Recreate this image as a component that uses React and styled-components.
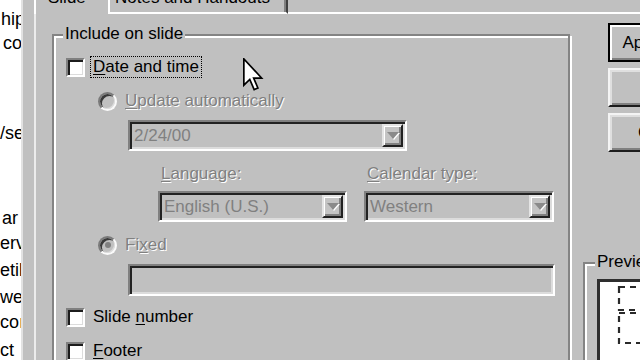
import React from 'react'
import styled, { createGlobalStyle } from 'styled-components'

const GlobalStyle = createGlobalStyle`
  html, body { margin: 0; padding: 0; }
  body {
    width: 640px;
    height: 360px;
    overflow: hidden;
    background: #c0c0c0;
    font-family: "Liberation Sans", Arial, sans-serif;
  }
`

const Screen = styled.div`
  position: relative;
  display: flex;
  width: 640px;
  height: 360px;
  overflow: hidden;
  font-size: 17px;
  color: #000;
  background: #c0c0c0;
`

const DocStrip = styled.div`
  flex: none;
  width: 21px;
  background: #fff;
  overflow: hidden;
  display: flex;
  flex-direction: column;
`

const DocLine = styled.div`
  height: 20px;
  line-height: 20px;
  margin-top: ${(p) => p.$gap}px;
  padding-left: ${(p) => p.$indent || 0}px;
  white-space: nowrap;
  font-size: 18px;
`

const Frame = styled.div`
  flex: none;
  width: 11px;
  border-left: 2px solid #e2e2e2;
`

const Main = styled.div`
  flex: 1;
  display: flex;
  flex-direction: column;
  min-width: 0;
`

const TabRow = styled.div`
  flex: none;
  height: 14px;
  display: flex;
  align-items: flex-end;
`

const Tab = styled.div`
  flex: none;
  box-sizing: border-box;
  width: ${(p) => p.$width}px;
  height: 14px;
  display: flex;
  align-items: flex-end;
  overflow: hidden;
  white-space: nowrap;
  line-height: 20px;
  border-left: 2px solid #fff;
  padding-left: ${(p) => p.$pad}px;
  padding-bottom: ${(p) => (p.$active ? 6 : 4)}px;
  border-right: ${(p) => (p.$active ? 'none' : '2px solid #404040')};
  border-bottom: ${(p) => (p.$active ? 'none' : '2px solid #fff')};
  box-shadow: ${(p) => (p.$active ? 'none' : 'inset -2px 0 0 #808080')};
`

const TabFiller = styled.div`
  flex: 1;
  height: 12px;
  border-bottom: 2px solid #fff;
`

const Panel = styled.div`
  flex: 1;
  display: flex;
  border-left: 2px solid #ececec;
  padding-left: 16px;
`

const Group = styled.div`
  position: relative;
  flex: none;
  box-sizing: border-box;
  width: ${(p) => p.$width}px;
  height: ${(p) => p.$height}px;
  margin-top: ${(p) => p.$top}px;
  margin-left: ${(p) => p.$left || 0}px;
  padding-left: ${(p) => p.$padLeft}px;
  border: 2px solid #848484;
  box-shadow: inset 2px 2px 0 #fff, 2px 2px 0 #fff;
  display: flex;
  flex-direction: column;
`

const GroupLabel = styled.span`
  position: absolute;
  top: -12px;
  left: ${(p) => p.$left}px;
  padding: 0 2px;
  line-height: 20px;
  background: #c0c0c0;
  white-space: nowrap;
`

const Row = styled.div`
  display: flex;
  align-items: center;
  height: 20px;
  margin-top: ${(p) => p.$top}px;
  margin-left: ${(p) => p.$left || 0}px;
  white-space: nowrap;
`

const Check = styled.span`
  flex: none;
  box-sizing: border-box;
  width: 19px;
  height: 19px;
  background: #fff;
  border: 2px solid;
  border-color: #808080 #fff #fff #808080;
  box-shadow: inset 2px 2px 0 #1c1c1c, inset -1px -1px 0 #dcdcdc;
`

const Radio = styled.span`
  position: relative;
  flex: none;
  box-sizing: border-box;
  width: 19px;
  height: 19px;
  border-radius: 50%;
  border: 2px solid;
  border-color: #7a7a7a #fafafa #fafafa #7a7a7a;
  box-shadow: inset 2px 2px 0 #3a3a3a, inset -1px -1px 0 #dcdcdc;
  background: #c0c0c0;

  &::after {
    content: '';
    display: ${(p) => (p.$checked ? 'block' : 'none')};
    position: absolute;
    left: 4.5px;
    top: 4.5px;
    width: 6px;
    height: 6px;
    border-radius: 50%;
    background: #808080;
  }
`

const Label = styled.span`
  margin-left: ${(p) => p.$gap}px;
  padding: 0 2px;
  line-height: 20px;
  border: 1px dotted ${(p) => (p.$focus ? '#000' : 'transparent')};
  color: ${(p) => (p.$disabled ? '#808080' : '#000')};
  text-shadow: ${(p) => (p.$disabled ? '1px 1px 0 #fff' : 'none')};
`

const Key = styled.span`
  text-decoration: underline;
  text-underline-offset: 2px;
`

const Field = styled.div`
  flex: none;
  box-sizing: border-box;
  display: flex;
  align-items: center;
  width: ${(p) => p.$width}px;
  height: ${(p) => p.$height || 31}px;
  margin-top: ${(p) => p.$top || 0}px;
  margin-left: ${(p) => p.$left || 0}px;
  padding: 2px 2px 2px 4px;
  border: 2px solid;
  border-color: #808080 #fff #fff #808080;
  box-shadow: inset 2px 2px 0 #222, inset -2px -2px 0 #dcdcdc;
  background: #c0c0c0;
  color: #808080;
  white-space: nowrap;
`

const DropButton = styled.span`
  flex: none;
  box-sizing: border-box;
  width: 21px;
  height: 23px;
  margin-left: auto;
  display: flex;
  align-items: center;
  justify-content: center;
  border: 2px solid;
  border-color: #e4e4e4 #202020 #202020 #e4e4e4;
  box-shadow: inset 1px 1px 0 #fff, inset -2px -2px 0 #808080;
  background: #c4c4c4;

  &::before {
    content: '';
    width: 0;
    height: 0;
    border-left: 6px solid transparent;
    border-right: 6px solid transparent;
    border-top: 7px solid #8a8a8a;
    filter: drop-shadow(1px 1px 0 #fff);
  }
`

const PairRow = styled.div`
  display: flex;
  gap: 17px;
  margin-top: 12px;
  margin-left: 92px;
`

const Column = styled.div`
  display: flex;
  flex-direction: column;
  gap: 6px;
`

const SideColumn = styled.div`
  flex: 1;
  display: flex;
  flex-direction: column;
  min-width: 0;
`

const Button = styled.div`
  flex: none;
  box-sizing: border-box;
  width: 113px;
  height: 39px;
  margin-top: ${(p) => p.$top}px;
  margin-left: 38px;
  display: flex;
  align-items: center;
  justify-content: center;
  white-space: nowrap;
  border: 2px solid;
  border-color: ${(p) => (p.$default ? '#000' : '#f4f4f4 #1c1c1c #1c1c1c #f4f4f4')};
  box-shadow: ${(p) =>
    p.$default
      ? 'inset 2px 2px 0 #fff, inset -2px -2px 0 #808080'
      : 'inset 2px 2px 0 #dfdfdf, inset -2px -2px 0 #808080'};
`

const PreviewBox = styled.div`
  flex: none;
  box-sizing: border-box;
  width: 130px;
  height: 100px;
  margin-top: 15px;
  margin-left: 12px;
  background: #fff;
  border-top: 3px solid #2e2e2e;
  border-left: 3px solid #2e2e2e;
`

const Cursor = styled.svg`
  position: absolute;
  left: 243px;
  top: 58px;
`

const docLines = [
  { text: 'hip', gap: 9, indent: 1 },
  { text: 'co', gap: 4, indent: 3 },
  { text: '/se', gap: 70 },
  { text: 'ar', gap: 65, indent: 2 },
  { text: 'erv', gap: 5 },
  { text: 'etil', gap: 7 },
  { text: 'we', gap: 7 },
  { text: 'coı', gap: 5 },
  { text: 'ct', gap: 8 }
]

const App = () => {
  return (
    <>
      <GlobalStyle />
      <Screen>
        <DocStrip>
          {docLines.map((line, index) => (
            <DocLine key={index} $gap={line.gap} $indent={line.indent}>
              {line.text}
            </DocLine>
          ))}
        </DocStrip>
        <Frame />

        <Main>
          <TabRow>
            <Tab $active $width={74} $pad={12}>Slide</Tab>
            <Tab $width={180} $pad={5}>Notes and Handouts</Tab>
            <TabFiller />
          </TabRow>

          <Panel>
            <Group $width={518} $height={400} $top={20} $padLeft={12}>
              <GroupLabel $left={9}>Include on slide</GroupLabel>

              <Row $top={21}>
                <Check />
                <Label $gap={5} $focus>
                  <Key>D</Key>ate and time
                </Label>
              </Row>

              <Row $top={14} $left={32}>
                <Radio />
                <Label $gap={5} $disabled>
                  <Key>U</Key>pdate automatically
                </Label>
              </Row>

              <Field $width={279} $top={9} $left={62}>
                2/24/00
                <DropButton />
              </Field>

              <PairRow>
                <Column>
                  <Label $gap={0} $disabled>
                    <Key>L</Key>anguage:
                  </Label>
                  <Field $width={189}>
                    English (U.S.)
                    <DropButton />
                  </Field>
                </Column>
                <Column>
                  <Label $gap={0} $disabled>
                    <Key>C</Key>alendar type:
                  </Label>
                  <Field $width={190}>
                    Western
                    <DropButton />
                  </Field>
                </Column>
              </PairRow>

              <Row $top={13} $left={32}>
                <Radio $checked />
                <Label $gap={5} $disabled>
                  Fi<Key>x</Key>ed
                </Label>
              </Row>

              <Field $width={427} $height={32} $top={9} $left={62} />

              <Row $top={11}>
                <Check />
                <Label $gap={5}>
                  Slide <Key>n</Key>umber
                </Label>
              </Row>

              <Row $top={14}>
                <Check />
                <Label $gap={5}>
                  <Key>F</Key>ooter
                </Label>
              </Row>
            </Group>

            <SideColumn>
              <Button $default $top={9}>Apply to All</Button>
              <Button $top={6}>Apply</Button>
              <Button $top={6}>Cancel</Button>

              <Group $width={140} $height={140} $top={110} $left={13} $padLeft={0}>
                <GroupLabel $left={10}>Preview</GroupLabel>
                <PreviewBox>
                  <svg width="127" height="97" viewBox="0 0 127 97">
                    <g fill="none" stroke="#2a2a2a" strokeWidth="2.2" strokeDasharray="6 5">
                      <rect x="19" y="5" width="90" height="23" />
                      <rect x="19" y="31" width="90" height="30" />
                    </g>
                  </svg>
                </PreviewBox>
              </Group>
            </SideColumn>
          </Panel>
        </Main>

        <Cursor width="22" height="34" viewBox="0 0 13 20">
          <path
            d="M0.5 0.5 L0.5 16 L4 12.6 L6.6 18.6 L8.8 17.7 L6.3 11.8 L11 11.8 Z"
            fill="#fff"
            stroke="#000"
            strokeWidth="1"
            strokeLinejoin="miter"
          />
        </Cursor>
      </Screen>
    </>
  )
}

export default App
